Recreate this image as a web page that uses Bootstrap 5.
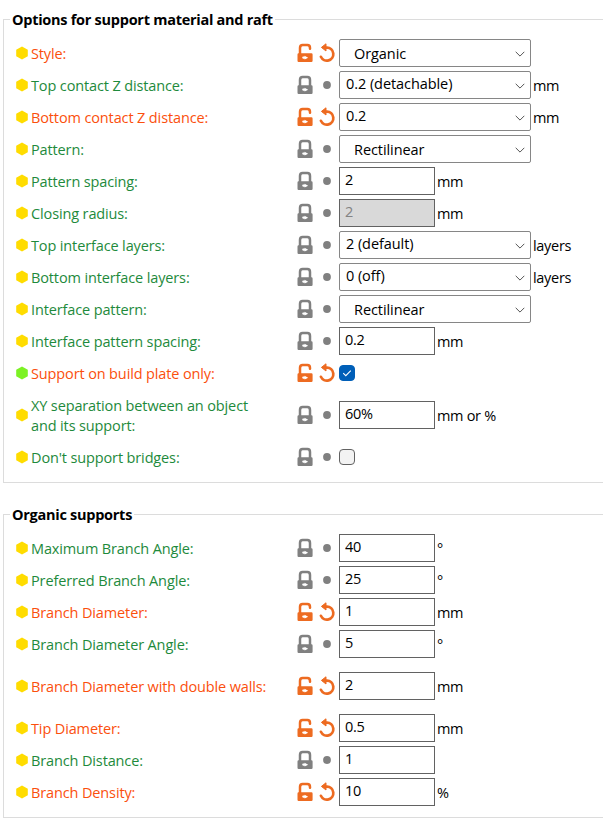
<!DOCTYPE html>
<html lang="en">
<head>
<meta charset="utf-8">
<meta name="viewport" content="width=device-width, initial-scale=1">
<title>Support material settings</title>
<link href="https://cdn.jsdelivr.net/npm/bootstrap@5.3.0/dist/css/bootstrap.min.css" rel="stylesheet">
<style>
  body { font: 14.5px/20px "Open Sans", "Noto Sans", sans-serif; color: #000; background: #fff; letter-spacing: -.31px; overflow: hidden; }
  main { padding-top: 10px; }
  .opt-group { border: 1px solid #dcdcdc; border-right: 0; margin-left: 3px; padding: 8px 0 9px; }
  .opt-group + .opt-group { margin-top: 22px; }
  .opt-title { font-size: 14.5px; font-weight: 700; line-height: 19px; height: 19px; letter-spacing: -.27px; margin-left: 6px; padding: 0 2px; white-space: nowrap; }
  .opt-row { height: 32px; padding-left: 12px; }
  .opt-tall { height: 52px; }
  .hex { width: 12px; height: 14px; margin: -1px 3px 0 0; fill: #ffdc00; }
  .hex-simple { fill: #7cf224; }
  .opt-name { width: 266px; padding-top: 1px; color: #1e8a3c; letter-spacing: -.13px; }
  .changed .opt-name { color: #fb4f0d; }
  .lock { width: 16px; height: 20px; margin-right: 6px; color: #808080; }
  .undo { width: 16px; height: 20px; margin-right: 4px; color: #808080; }
  .changed .lock, .changed .undo { color: #ed6b21; }
  .opt-row .form-control, .opt-row .form-select { height: 28px; flex: none; font-size: 14.5px; line-height: 20px; letter-spacing: -.3px; color: #000; background-color: #fff; }
  .opt-row .form-control { width: 96px; border: 1px solid #626262; border-radius: 0; padding: 1px 5px 5px; }
  .opt-row .form-control:disabled { background-color: #d9d9d9; color: #838383; }
  .opt-row .form-select { width: 192px; letter-spacing: -.07px; border: 1px solid #868686; border-radius: 2px; padding: 2px 24px 4px 6px;
    background-image: url("data:image/svg+xml,%3Csvg xmlns='http://www.w3.org/2000/svg' viewBox='0 0 10 6'%3E%3Cpath d='M.7.8 5 5.1 9.3.8' fill='none' stroke='%23555'/%3E%3C/svg%3E");
    background-size: 10px 6px; background-position: right 5px top 11px; }
  .opt-row .form-select.choice { padding: 4px 24px 2px 14px; }
  .opt-row .form-check-input { width: 16px; height: 16px; margin: 0; border: 1px solid #626262; border-radius: 4px; background-color: #f3f3f3; flex: none; }
  .opt-row .form-check-input:checked { background-color: #005fb8; border-color: #005fb8;
    background-image: url("data:image/svg+xml,%3Csvg xmlns='http://www.w3.org/2000/svg' viewBox='0 0 14 14'%3E%3Cpath d='M3.2 7.2 5.8 9.7 10.8 4.6' fill='none' stroke='%23fff' stroke-width='1.1'/%3E%3C/svg%3E"); }
  .unit { padding: 1px 0 0 2px; white-space: nowrap; }
</style>
<script src="https://cdn.jsdelivr.net/npm/bootstrap@5.3.0/dist/js/bootstrap.bundle.min.js"></script>
</head>
<body>
<svg class="d-none">
  <symbol id="hex" viewBox="0 0 12 14"><path d="M6 .4 11.8 3.7V10.3L6 13.6.2 10.3V3.7Z"/></symbol>
  <symbol id="locked" viewBox="0 0 16 20">
    <path d="M3 11V5Q3 2.1 5.6 2.1H10.4Q13 2.1 13 5V11" fill="none" stroke="currentColor" stroke-width="2.5"/>
    <path fill="currentColor" fill-rule="evenodd" d="M1.6 10.2H14.4Q15.6 10.2 15.6 11.4V17.8Q15.6 19 14.4 19H1.6Q.5 19 .5 17.8V11.4Q.5 10.2 1.6 10.2ZM7.6 12.8V13.5H6.2Q5.2 13.5 5.2 14.6T6.2 15.8H7.6V16.5L11.2 14.7Z"/>
  </symbol>
  <symbol id="unlocked" viewBox="0 0 16 20">
    <path d="M3 11V5Q3 2.1 5.6 2.1H10.4Q13 2.1 13 5V5.7" fill="none" stroke="currentColor" stroke-width="2.5" stroke-linecap="round"/>
    <path fill="currentColor" fill-rule="evenodd" d="M1.6 10.2H14.4Q15.6 10.2 15.6 11.4V17.8Q15.6 19 14.4 19H1.6Q.5 19 .5 17.8V11.4Q.5 10.2 1.6 10.2ZM7.6 12.8V13.5H6.2Q5.2 13.5 5.2 14.6T6.2 15.8H7.6V16.5L11.2 14.7Z"/>
  </symbol>
  <symbol id="undo" viewBox="0 0 16 20">
    <path d="M6 4.6H8A6.5 6.5 0 1 1 1.9 13.8" fill="none" stroke="currentColor" stroke-width="2.7" stroke-linecap="round"/>
    <path fill="currentColor" stroke="currentColor" stroke-linejoin="round" d="M2.4 4.4 7 .8V8Z"/>
  </symbol>
  <symbol id="dot" viewBox="0 0 16 20"><circle cx="8" cy="10" r="3.9" fill="currentColor"/></symbol>
</svg>

<main>
<fieldset class="opt-group" id="support">
  <legend class="opt-title float-none w-auto mb-0">Options for support material and raft</legend>
  <div class="opt-row d-flex align-items-center changed"><svg class="hex"><use href="#hex"/></svg><label class="opt-name"><span>Style:</span></label><svg class="lock"><use href="#unlocked"/></svg><svg class="undo"><use href="#undo"/></svg><select class="form-select choice"><option>Organic</option></select></div>
  <div class="opt-row d-flex align-items-center"><svg class="hex"><use href="#hex"/></svg><label class="opt-name"><span>Top contact Z distance:</span></label><svg class="lock"><use href="#locked"/></svg><svg class="undo"><use href="#dot"/></svg><select class="form-select"><option>0.2 (detachable)</option></select><span class="unit">mm</span></div>
  <div class="opt-row d-flex align-items-center changed"><svg class="hex"><use href="#hex"/></svg><label class="opt-name"><span>Bottom contact Z distance:</span></label><svg class="lock"><use href="#unlocked"/></svg><svg class="undo"><use href="#undo"/></svg><select class="form-select"><option>0.2</option></select><span class="unit">mm</span></div>
  <div class="opt-row d-flex align-items-center"><svg class="hex"><use href="#hex"/></svg><label class="opt-name"><span>Pattern:</span></label><svg class="lock"><use href="#locked"/></svg><svg class="undo"><use href="#dot"/></svg><select class="form-select choice"><option>Rectilinear</option></select></div>
  <div class="opt-row d-flex align-items-center"><svg class="hex"><use href="#hex"/></svg><label class="opt-name"><span>Pattern spacing:</span></label><svg class="lock"><use href="#locked"/></svg><svg class="undo"><use href="#dot"/></svg><input class="form-control" value="2"><span class="unit">mm</span></div>
  <div class="opt-row d-flex align-items-center"><svg class="hex"><use href="#hex"/></svg><label class="opt-name"><span>Closing radius:</span></label><svg class="lock"><use href="#locked"/></svg><svg class="undo"><use href="#dot"/></svg><input class="form-control" value="2" disabled><span class="unit">mm</span></div>
  <div class="opt-row d-flex align-items-center"><svg class="hex"><use href="#hex"/></svg><label class="opt-name"><span>Top interface layers:</span></label><svg class="lock"><use href="#locked"/></svg><svg class="undo"><use href="#dot"/></svg><select class="form-select"><option>2 (default)</option></select><span class="unit">layers</span></div>
  <div class="opt-row d-flex align-items-center"><svg class="hex"><use href="#hex"/></svg><label class="opt-name"><span>Bottom interface layers:</span></label><svg class="lock"><use href="#locked"/></svg><svg class="undo"><use href="#dot"/></svg><select class="form-select"><option>0 (off)</option></select><span class="unit">layers</span></div>
  <div class="opt-row d-flex align-items-center"><svg class="hex"><use href="#hex"/></svg><label class="opt-name"><span>Interface pattern:</span></label><svg class="lock"><use href="#locked"/></svg><svg class="undo"><use href="#dot"/></svg><select class="form-select choice"><option>Rectilinear</option></select></div>
  <div class="opt-row d-flex align-items-center"><svg class="hex"><use href="#hex"/></svg><label class="opt-name"><span>Interface pattern spacing:</span></label><svg class="lock"><use href="#locked"/></svg><svg class="undo"><use href="#dot"/></svg><input class="form-control" value="0.2"><span class="unit">mm</span></div>
  <div class="opt-row d-flex align-items-center changed"><svg class="hex hex-simple"><use href="#hex"/></svg><label class="opt-name"><span>Support on build plate only:</span></label><svg class="lock"><use href="#unlocked"/></svg><svg class="undo"><use href="#undo"/></svg><input class="form-check-input" type="checkbox" checked></div>
  <div class="opt-row opt-tall d-flex align-items-center"><svg class="hex"><use href="#hex"/></svg><label class="opt-name"><span>XY separation between an object<br>and its support:</span></label><svg class="lock"><use href="#locked"/></svg><svg class="undo"><use href="#dot"/></svg><input class="form-control" value="60%"><span class="unit">mm or %</span></div>
  <div class="opt-row d-flex align-items-center"><svg class="hex"><use href="#hex"/></svg><label class="opt-name"><span>Don't support bridges:</span></label><svg class="lock"><use href="#locked"/></svg><svg class="undo"><use href="#dot"/></svg><input class="form-check-input" type="checkbox"></div>
</fieldset>
<fieldset class="opt-group" id="organic">
  <legend class="opt-title float-none w-auto mb-0">Organic supports</legend>
  <div class="opt-row d-flex align-items-center"><svg class="hex"><use href="#hex"/></svg><label class="opt-name"><span>Maximum Branch Angle:</span></label><svg class="lock"><use href="#locked"/></svg><svg class="undo"><use href="#dot"/></svg><input class="form-control" value="40"><span class="unit">°</span></div>
  <div class="opt-row d-flex align-items-center"><svg class="hex"><use href="#hex"/></svg><label class="opt-name"><span>Preferred Branch Angle:</span></label><svg class="lock"><use href="#locked"/></svg><svg class="undo"><use href="#dot"/></svg><input class="form-control" value="25"><span class="unit">°</span></div>
  <div class="opt-row d-flex align-items-center changed"><svg class="hex"><use href="#hex"/></svg><label class="opt-name"><span>Branch Diameter:</span></label><svg class="lock"><use href="#unlocked"/></svg><svg class="undo"><use href="#undo"/></svg><input class="form-control" value="1"><span class="unit">mm</span></div>
  <div class="opt-row d-flex align-items-center"><svg class="hex"><use href="#hex"/></svg><label class="opt-name"><span>Branch Diameter Angle:</span></label><svg class="lock"><use href="#locked"/></svg><svg class="undo"><use href="#dot"/></svg><input class="form-control" value="5"><span class="unit">°</span></div>
  <div class="opt-row opt-tall d-flex align-items-center changed"><svg class="hex"><use href="#hex"/></svg><label class="opt-name"><span>Branch Diameter with double walls:</span></label><svg class="lock"><use href="#unlocked"/></svg><svg class="undo"><use href="#undo"/></svg><input class="form-control" value="2"><span class="unit">mm</span></div>
  <div class="opt-row d-flex align-items-center changed"><svg class="hex"><use href="#hex"/></svg><label class="opt-name"><span>Tip Diameter:</span></label><svg class="lock"><use href="#unlocked"/></svg><svg class="undo"><use href="#undo"/></svg><input class="form-control" value="0.5"><span class="unit">mm</span></div>
  <div class="opt-row d-flex align-items-center"><svg class="hex"><use href="#hex"/></svg><label class="opt-name"><span>Branch Distance:</span></label><svg class="lock"><use href="#locked"/></svg><svg class="undo"><use href="#dot"/></svg><input class="form-control" value="1"></div>
  <div class="opt-row d-flex align-items-center changed"><svg class="hex"><use href="#hex"/></svg><label class="opt-name"><span>Branch Density:</span></label><svg class="lock"><use href="#unlocked"/></svg><svg class="undo"><use href="#undo"/></svg><input class="form-control" value="10"><span class="unit">%</span></div>
</fieldset>
</main>
</body>
</html>
